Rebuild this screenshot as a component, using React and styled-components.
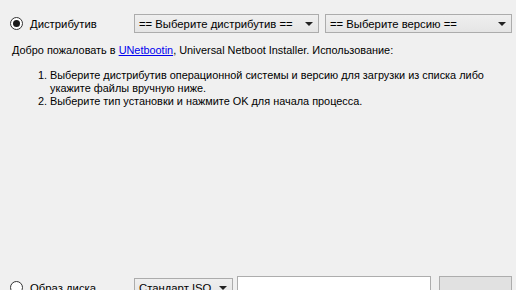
import React from 'react';
import styled, { createGlobalStyle } from 'styled-components';

const Global = createGlobalStyle`
  html, body { margin: 0; padding: 0; background: #f0f0f0; }
  body { font-family: "Liberation Sans", Arial, sans-serif; font-size: 10.9px; color: #000; }
`;

const Window = styled.div`
  width: 516px;
  height: 290px;
  overflow: hidden;
  background: #f0f0f0;
  display: flex;
  flex-direction: column;
  box-sizing: border-box;
  padding: 14px 4px 0 10px;
`;

const Row = styled.div`
  display: flex;
  align-items: center;
  height: 19px;
`;

const RadioLabel = styled.label`
  display: flex;
  align-items: center;
  gap: 7px;
  width: 124px;
  flex-shrink: 0;
  font-size: 11.3px;
`;

const RadioDot = styled.span`
  width: 11px;
  height: 11px;
  border: 1px solid #333;
  border-radius: 50%;
  background: #fff;
  display: flex;
  align-items: center;
  justify-content: center;
  &::after {
    content: '';
    width: 7px;
    height: 7px;
    border-radius: 50%;
    background: ${p => (p.$checked ? '#1a1a1a' : 'transparent')};
  }
`;

const Combo = styled.div`
  box-sizing: border-box;
  width: ${p => p.$w}px;
  height: 19px;
  margin-right: ${p => p.$mr || 0}px;
  border: 1px solid #acacac;
  background: linear-gradient(#efefef, #e5e5e5);
  display: flex;
  align-items: center;
  justify-content: space-between;
  padding: 0 5px 0 4px;
  white-space: nowrap;
  flex-shrink: 0;
  font-size: 11.3px;
`;

const Arrow = styled.span`
  width: 0;
  height: 0;
  border-left: 4px solid transparent;
  border-right: 4px solid transparent;
  border-top: 4px solid #222;
`;

const Welcome = styled.p`
  margin: 10px 0 0 2px;
  line-height: 14px;
`;

const Link = styled.a`
  color: #0000ee;
  text-decoration: underline;
`;

const Steps = styled.ol`
  margin: 12px 0 0;
  padding-left: 40px;
  line-height: 13px;
`;

const Bottom = styled.div`
  margin-top: auto;
  display: flex;
  align-items: center;
  height: 23px;
  margin-bottom: -9px;
`;

const TextInput = styled.div`
  box-sizing: border-box;
  width: 194px;
  height: 23px;
  border: 1px solid #adadad;
  background: #fff;
  margin-right: 8px;
`;

const Button = styled.div`
  box-sizing: border-box;
  width: 73px;
  height: 23px;
  border: 1px solid #adadad;
  background: #e1e1e1;
  display: flex;
  align-items: center;
  justify-content: center;
`;

const Radio = ({ checked, children }) => (
  <RadioLabel>
    <RadioDot $checked={checked} />
    {children}
  </RadioLabel>
);

export default function App() {
  return (
    <>
      <Global />
      <Window>
        <Row>
          <Radio checked>Дистрибутив</Radio>
          <Combo $w={185} $mr={6}>
            <span>== Выберите дистрибутив ==</span>
            <Arrow />
          </Combo>
          <Combo $w={187}>
            <span>== Выберите версию ==</span>
            <Arrow />
          </Combo>
        </Row>
        <Welcome>
          Добро пожаловать в <Link href="#">UNetbootin</Link>, Universal Netboot Installer. Использование:
        </Welcome>
        <Steps>
          <li>Выберите дистрибутив операционной системы и версию для загрузки из списка либо укажите файлы вручную ниже.</li>
          <li>Выберите тип установки и нажмите OK для начала процесса.</li>
        </Steps>
        <Bottom>
          <Radio>Образ диска</Radio>
          <Combo $w={99} $mr={4}>
            <span>Стандарт ISO</span>
            <Arrow />
          </Combo>
          <TextInput />
          <Button>...</Button>
        </Bottom>
      </Window>
    </>
  );
}
